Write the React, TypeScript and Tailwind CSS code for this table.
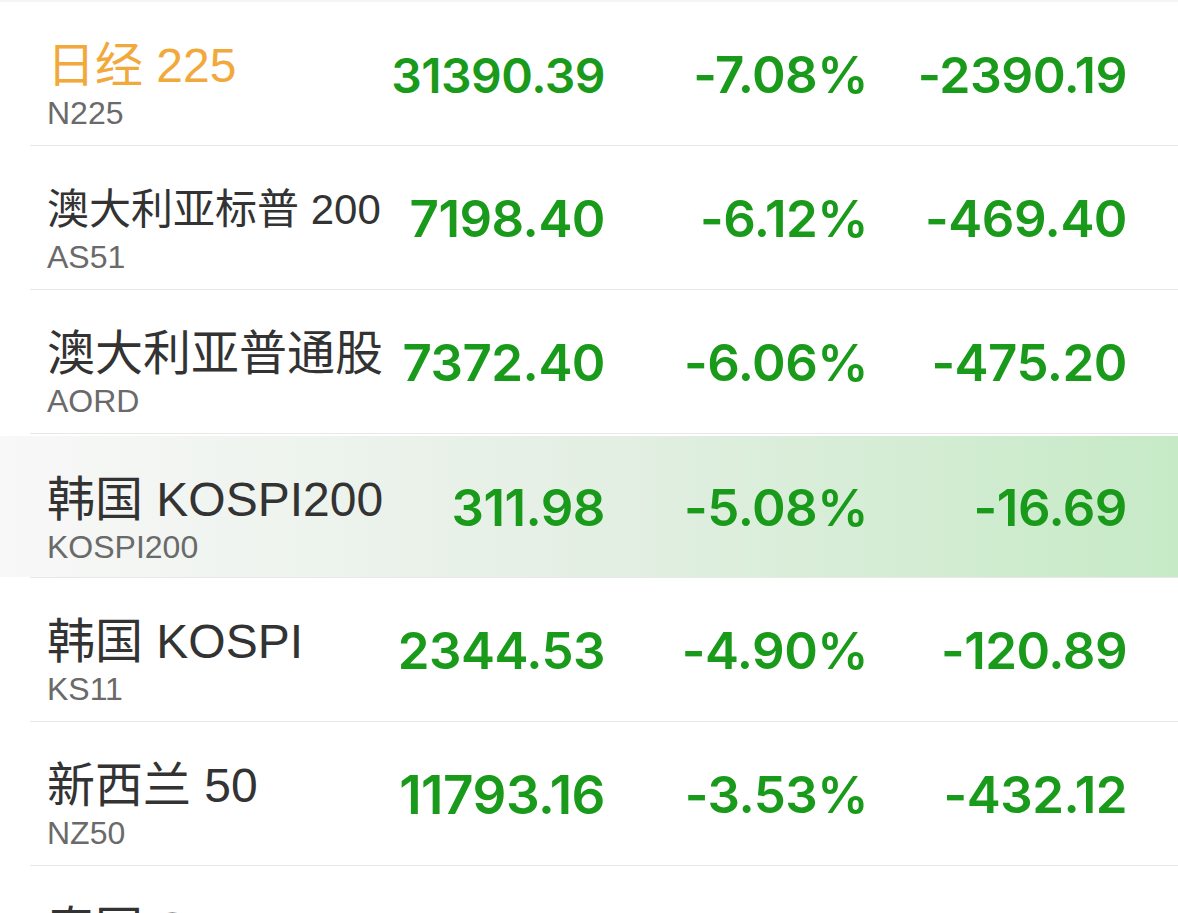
type TRow = {
  name: string;
  code: string;
  price: string;
  pct: string;
  change: string;
  nameSize?: string;
  priceSize?: string;
  changeSize?: string;
  highlight?: boolean;
  accent?: boolean;
};

const rows: TRow[] = [
  {
    name: "日经 225",
    code: "N225",
    price: "31390.39",
    pct: "-7.08%",
    change: "-2390.19",
    priceSize: "text-[48px]",
    changeSize: "text-[50px]",
    accent: true,
  },
  { name: "澳大利亚标普 200", code: "AS51", price: "7198.40", pct: "-6.12%", change: "-469.40", nameSize: "text-[42px]" },
  { name: "澳大利亚普通股", code: "AORD", price: "7372.40", pct: "-6.06%", change: "-475.20" },
  { name: "韩国 KOSPI200", code: "KOSPI200", price: "311.98", pct: "-5.08%", change: "-16.69", highlight: true },
  { name: "韩国 KOSPI", code: "KS11", price: "2344.53", pct: "-4.90%", change: "-120.89" },
  { name: "新西兰 50", code: "NZ50", price: "11793.16", pct: "-3.53%", change: "-432.12", priceSize: "text-[53px]" },
  { name: "泰国 SET", code: "SET", price: "1125.93", pct: "-3.20%", change: "-37.21" },
];

const latin = "font-['Liberation_Sans','Noto_Sans_CJK_SC',sans-serif]";
const nums = "font-['Inter','Liberation_Sans',sans-serif]";

export default function App() {
  return (
    <div className="w-[1178px] h-[913px] overflow-hidden bg-white">
      <div className="h-[2px] bg-[#f4f4f4]" />
      {rows.map((row, key) => (
        <QuoteRow row={row} key={key} />
      ))}
    </div>
  );
}

function QuoteRow({ row }: { row: TRow }) {
  return (
    <div className="h-[144px] flex flex-col">
      <div
        className={
          row.highlight
            ? "flex-1 flex mt-[2px] bg-linear-to-r from-[#f8f8f8] via-[#e4efe4] to-[#c6eac6]"
            : "flex-1 flex"
        }
      >
        <div className="w-[377px] shrink-0 pl-[47px] pt-[34px] whitespace-nowrap">
          <div
            className={`${latin} ${row.nameSize ?? "text-[48px]"} leading-[60px] ${
              row.accent ? "text-[#f2a93b]" : "text-[#333333]"
            }`}
          >
            {row.name}
          </div>
          <div className={`${latin} text-[32px] leading-[34px] text-[#6a6a6a]`}>
            {row.code}
          </div>
        </div>
        <Cell value={row.price} width="w-[228px]" size={row.priceSize} />
        <Cell value={row.pct} width="w-[263px]" />
        <Cell value={row.change} width="w-[259px]" size={row.changeSize} />
        {row.highlight && (
          <div className="flex items-center pl-[49px] text-[50px] text-[#555] font-semibold">
            <span className={nums}>-</span>
          </div>
        )}
      </div>
      <div className="h-px ml-[30px] bg-[#e8e8e8]" />
    </div>
  );
}

function Cell({ value, width, size }: { value: string; width: string; size?: string }) {
  return (
    <div
      className={`${width} shrink-0 flex items-center justify-end pt-[4px] ${nums} font-semibold text-[#1a9a1a] tracking-[-0.5px] ${
        size ?? "text-[51px]"
      }`}
    >
      {value}
    </div>
  );
}
